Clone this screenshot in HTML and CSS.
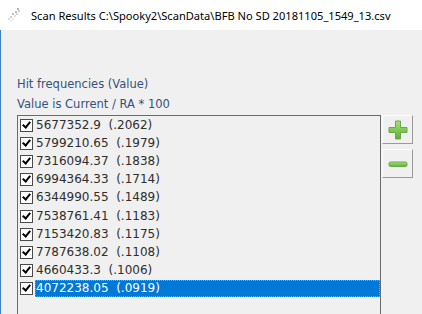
FILE: index.html
```html
<!DOCTYPE html>
<html lang="en">

<head>
    <meta charset="UTF-8">
    <title>Scan Results</title>
    <link rel="stylesheet" href="styles.css">
</head>

<body>
    <div class="titlebar">
        <svg class="app-icon" width="16" height="16" viewBox="0 0 16 16">
            <circle cx="12" cy="2" r="0.8" fill="#555" />
            <circle cx="13" cy="4" r="0.7" fill="#777" />
            <circle cx="10" cy="5" r="0.9" fill="#999" />
            <circle cx="7" cy="7" r="1" fill="#aaa" />
            <circle cx="9" cy="9" r="0.8" fill="#bbb" />
            <circle cx="5" cy="10" r="1" fill="#bbb" />
            <circle cx="3" cy="12" r="0.9" fill="#ccc" />
            <circle cx="7" cy="12" r="0.8" fill="#ccc" />
            <circle cx="11" cy="7" r="0.7" fill="#999" />
            <circle cx="5" cy="14" r="0.8" fill="#ddd" />
        </svg>
        <span class="title">Scan Results C:\Spooky2\ScanData\BFB No SD 20181105_1549_13.csv</span>
    </div>

    <div class="client">
        <div class="caption">Hit frequencies (Value)</div>
        <div class="caption">Value is Current / RA * 100</div>

        <div class="list-area">
            <div class="listbox">
                <div class="item"><span class="check"></span><span class="text">5677352.9  (.2062)</span></div>
                <div class="item"><span class="check"></span><span class="text">5799210.65  (.1979)</span></div>
                <div class="item"><span class="check"></span><span class="text">7316094.37  (.1838)</span></div>
                <div class="item"><span class="check"></span><span class="text">6994364.33  (.1714)</span></div>
                <div class="item"><span class="check"></span><span class="text">6344990.55  (.1489)</span></div>
                <div class="item"><span class="check"></span><span class="text">7538761.41  (.1183)</span></div>
                <div class="item"><span class="check"></span><span class="text">7153420.83  (.1175)</span></div>
                <div class="item"><span class="check"></span><span class="text">7787638.02  (.1108)</span></div>
                <div class="item"><span class="check"></span><span class="text">4660433.3  (.1006)</span></div>
                <div class="item selected"><span class="check"></span><span class="text">4072238.05  (.0919)</span></div>
            </div>

            <div class="buttons">
                <button class="tool-btn">
                    <svg width="22" height="22" viewBox="0 0 22 22">
                        <defs>
                            <linearGradient id="g1" x1="0" y1="0" x2="0" y2="1">
                                <stop offset="0" stop-color="#a8e07a" />
                                <stop offset="1" stop-color="#5fae2e" />
                            </linearGradient>
                        </defs>
                        <path d="M8.5 2h5v6.5H20v5h-6.5V20h-5v-6.5H2v-5h6.5z" fill="url(#g1)" stroke="#6aa84f" stroke-width="1" />
                    </svg>
                </button>
                <button class="tool-btn">
                    <svg width="22" height="22" viewBox="0 0 22 22">
                        <defs>
                            <linearGradient id="g2" x1="0" y1="0" x2="0" y2="1">
                                <stop offset="0" stop-color="#a8e07a" />
                                <stop offset="1" stop-color="#5fae2e" />
                            </linearGradient>
                        </defs>
                        <rect x="2" y="9" width="18" height="4.5" rx="1.5" fill="url(#g2)" stroke="#6aa84f" stroke-width="1" />
                    </svg>
                </button>
            </div>
        </div>
    </div>
</body>

</html>
```

FILE: styles.css
```css
html, body {
    margin: 0;
    padding: 0;
    height: 100%;
    overflow: hidden;
}

body {
    background-color: #f0f0f0;
    font-family: "DejaVu Sans", sans-serif;
}

.titlebar {
    height: 30px;
    background: white;
    display: flex;
    align-items: center;
    padding-left: 6px;
    gap: 9px;
}

.title {
    font-family: "Noto Sans", sans-serif;
    font-size: 11.1px;
    color: #000;
}

.client {
    height: 284px;
    overflow: hidden;
    border-left: 1px solid #3d7fc1;
    padding: 44px 0 0 16px;
    box-sizing: border-box;
}

.caption {
    font-size: 11.5px;
    line-height: 20px;
    color: #34507f;
}

.list-area {
    display: flex;
    align-items: flex-start;
    margin-top: 1px;
}

.listbox {
    width: 362px;
    height: 220px;
    border: 1px solid #6b6b6b;
    background: #f0f0f0;
}

.item {
    display: flex;
    align-items: center;
    height: 18.2px;
    padding-left: 2px;
    font-size: 12px;
    color: #2e2e2e;
}

.check {
    width: 11px;
    height: 11px;
    border: 1px solid #4a4a4a;
    background: white;
    margin-right: 2px;
    position: relative;
    flex: none;
}

.check::after {
    content: "";
    position: absolute;
    left: 3px;
    top: 0px;
    width: 3px;
    height: 6px;
    border-right: 2px solid #000;
    border-bottom: 2px solid #000;
    transform: rotate(40deg);
}

.text {
    flex: 1;
    height: 17px;
    line-height: 17px;
    padding-left: 1px;
    white-space: pre;
}

.selected .text {
    background: #0078d7;
    color: white;
    outline: 1px dotted #8aa;
    outline-offset: -1px;
}

.buttons {
    display: flex;
    flex-direction: column;
    gap: 5px;
    margin-left: 1px;
}

.tool-btn {
    width: 31px;
    height: 29px;
    padding: 0;
    background: #f0f0f0;
    border: 1px solid;
    border-color: #fdfdfd #9a9a9a #9a9a9a #fdfdfd;
    display: flex;
    align-items: center;
    justify-content: center;
}
```
